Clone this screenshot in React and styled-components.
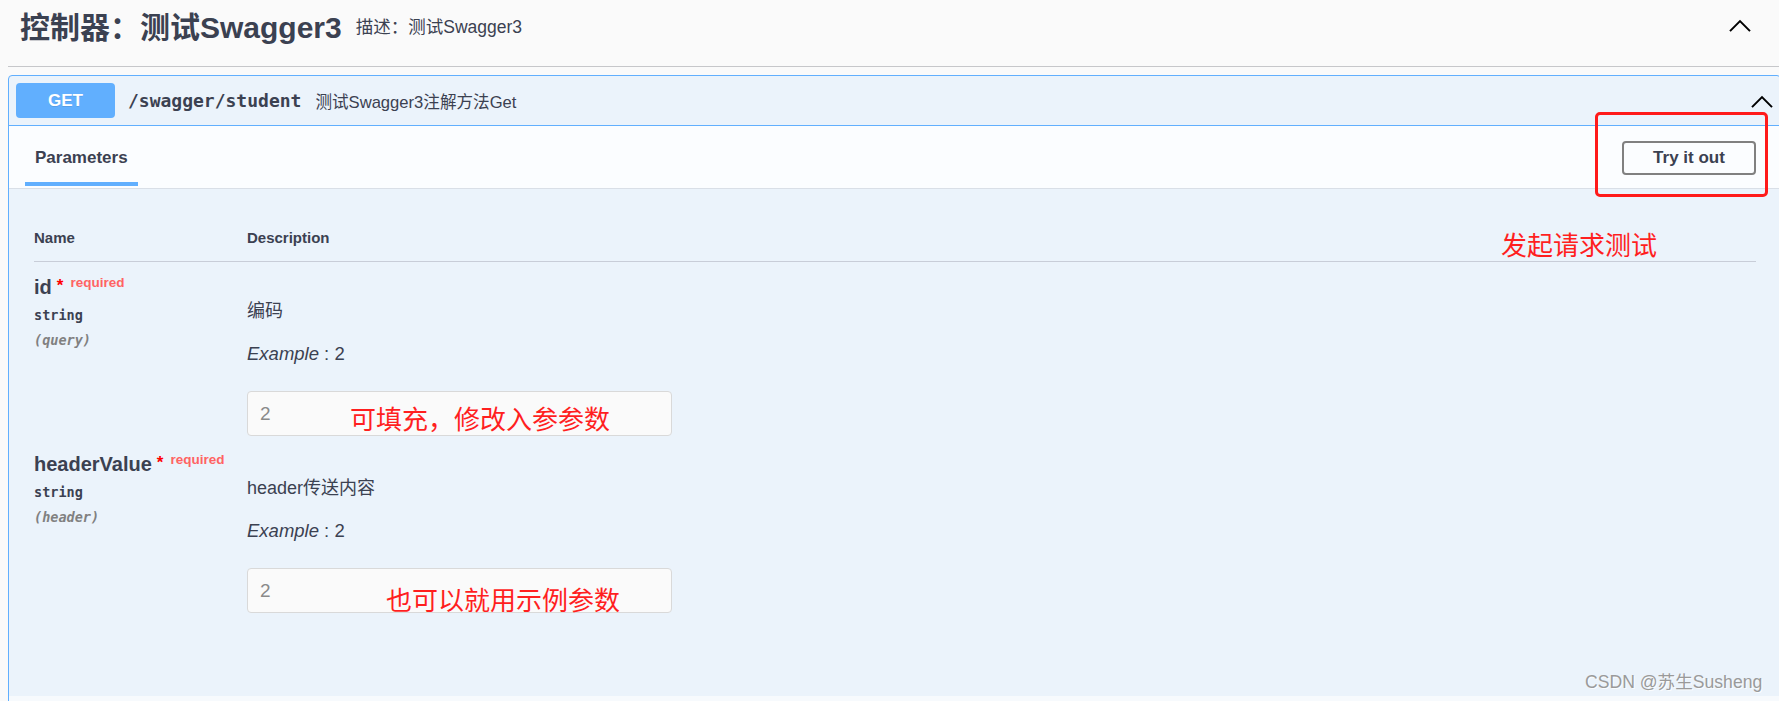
import React from 'react';
import styled, { createGlobalStyle } from 'styled-components';

const GlobalStyle = createGlobalStyle`
  html, body {
    margin: 0;
    padding: 0;
    overflow: hidden;
    background: #fafafa;
  }
  body {
    font-family: "Liberation Sans", Arial, "Noto Sans CJK SC", sans-serif;
    color: #3b4151;
  }
`;

const params = [
  { name: 'id', type: 'string', place: '(query)', desc: '编码', example: '2', note: '可填充，修改入参参数', noteLeft: 103 },
  { name: 'headerValue', type: 'string', place: '(header)', desc: 'header传送内容', example: '2', note: '也可以就用示例参数', noteLeft: 139, noteTop: 16 },
];

const Chevron = ({ size = 22 }) => (
  <svg width={size} height={size * 0.6} viewBox="0 0 22 13" fill="none">
    <polyline points="1,12 11,2 21,12" stroke="#000" strokeWidth="2" />
  </svg>
);

const App = () => {
  return (
    <Page>
      <GlobalStyle />
      <TagHeader>
        <TagTitle>控制器：测试Swagger3</TagTitle>
        <TagDesc>描述：测试Swagger3</TagDesc>
        <TagToggle><Chevron /></TagToggle>
      </TagHeader>

      <Opblock>
        <Summary>
          <Method>GET</Method>
          <Path>/swagger/student</Path>
          <SummaryDesc>测试Swagger3注解方法Get</SummaryDesc>
          <SummaryToggle><Chevron /></SummaryToggle>
        </Summary>

        <SectionHeader>
          <Tab>Parameters</Tab>
          <TryButton>Try it out</TryButton>
        </SectionHeader>

        <Body>
          <TableHead>
            <HeadCell>Name</HeadCell>
            <HeadCell>Description</HeadCell>
          </TableHead>
          {params.map((p, i) => (
            <Row key={p.name} first={i === 0}>
              <NameCol>
                <ParamName>
                  {p.name}
                  <Star>*</Star>
                  <Required>required</Required>
                </ParamName>
                <ParamType>{p.type}</ParamType>
                <ParamIn>{p.place}</ParamIn>
              </NameCol>
              <DescCol>
                <DescText>{p.desc}</DescText>
                <Example><i>Example</i> : {p.example}</Example>
                <InputWrap>
                  <Field placeholder="2" readOnly />
                  <Note style={{ left: p.noteLeft, top: p.noteTop || 12 }}>{p.note}</Note>
                </InputWrap>
              </DescCol>
            </Row>
          ))}
        </Body>
        <Footer />
      </Opblock>

      <RedBox />
      <SideNote>发起请求测试</SideNote>
      <Watermark>CSDN @苏生Susheng</Watermark>
    </Page>
  );
};

const Page = styled.div`
  position: relative;
  width: 1781px;
  height: 701px;
  padding-left: 8px;
  box-sizing: border-box;
  overflow: hidden;
`;

const TagHeader = styled.div`
  display: flex;
  align-items: center;
  height: 67px;
  box-sizing: border-box;
  padding: 0 30px 10px 12px;
  border-bottom: 1px solid #c6c7ca;
`;

const TagTitle = styled.h4`
  margin: 0;
  font-size: 30px;
  font-weight: 700;
  line-height: 36px;
  color: #3b4151;
`;

const TagDesc = styled.span`
  margin-left: 14px;
  font-size: 17.5px;
  line-height: 20px;
  margin-top: -3px;
`;

const TagToggle = styled.div`
  margin-left: auto;
  display: flex;
  margin-top: -4px;
`;

const Opblock = styled.div`
  margin-top: 8px;
  border: 1px solid #61affe;
  border-radius: 4px;
  background: #ebf3fb;
`;

const Summary = styled.div`
  display: flex;
  align-items: center;
  padding: 7px;
  border-bottom: 1px solid #61affe;
`;

const Method = styled.span`
  width: 99px;
  height: 35px;
  display: flex;
  align-items: center;
  justify-content: center;
  background: #61affe;
  border-radius: 4px;
  color: #fff;
  font-size: 17px;
  font-weight: 700;
  text-shadow: 0 1px 0 rgba(0, 0, 0, 0.1);
`;

const Path = styled.span`
  margin-left: 13px;
  font-family: "DejaVu Sans Mono", monospace;
  font-weight: 700;
  font-size: 18px;
  color: #3b4151;
`;

const SummaryDesc = styled.span`
  margin-left: 14px;
  font-size: 16.6px;
`;

const SummaryToggle = styled.div`
  margin-left: auto;
  display: flex;
  margin-top: 2px;
`;

const SectionHeader = styled.div`
  display: flex;
  height: 63px;
  box-sizing: border-box;
  padding: 0 24px 0 16px;
  background: #fbfdff;
  border-bottom: 1px solid #d9dfe7;
`;

const Tab = styled.div`
  position: relative;
  display: flex;
  align-items: center;
  padding: 1px 10px 0;
  font-size: 17px;
  font-weight: 700;
  &::after {
    content: '';
    position: absolute;
    left: 0;
    right: 0;
    bottom: 2px;
    height: 4px;
    background: #61affe;
  }
`;

const TryButton = styled.button`
  margin-left: auto;
  align-self: center;
  width: 134px;
  height: 34px;
  border: 2px solid #808080;
  border-radius: 4px;
  background: transparent;
  font-family: "Liberation Sans", Arial, sans-serif;
  font-size: 17px;
  font-weight: 700;
  color: #3b4151;
  margin-top: 1px;
`;

const Body = styled.div`
  padding: 0 24px 83px 25px;
`;

const TableHead = styled.div`
  display: grid;
  grid-template-columns: 213px 1fr;
  padding: 39px 0 13px;
  border-bottom: 1px solid #c8cdd8;
`;

const HeadCell = styled.div`
  font-size: 15px;
  font-weight: 700;
  line-height: 20px;
`;

const Row = styled.div`
  display: grid;
  grid-template-columns: 213px 1fr;
  padding-top: ${p => (p.first ? '13px' : '16px')};
`;

const NameCol = styled.div`
  display: flex;
  flex-direction: column;
`;

const ParamName = styled.div`
  font-size: 20px;
  font-weight: 700;
  line-height: 24px;
  white-space: nowrap;
`;

const Star = styled.span`
  position: relative;
  top: -3px;
  margin-left: 5px;
  font-size: 17px;
  font-weight: 700;
  color: #f00;
`;

const Required = styled.span`
  position: relative;
  top: -7px;
  margin-left: 7px;
  font-size: 13.5px;
  font-weight: 700;
  color: #ff6363;
`;

const ParamType = styled.div`
  margin-top: 3px;
  font-family: "DejaVu Sans Mono", monospace;
  font-weight: 700;
  font-size: 13.5px;
  line-height: 20px;
`;

const ParamIn = styled.div`
  margin-top: 5px;
  font-family: "DejaVu Sans Mono", monospace;
  font-style: italic;
  font-weight: 600;
  font-size: 13.5px;
  line-height: 20px;
  color: #808080;
`;

const DescCol = styled.div`
  display: flex;
  flex-direction: column;
`;

const DescText = styled.p`
  margin: 23px 0 0;
  font-size: 18px;
  line-height: 26px;
`;

const Example = styled.p`
  margin: 17px 0 0;
  font-size: 18.5px;
  line-height: 26px;
`;

const InputWrap = styled.div`
  position: relative;
  margin-top: 24px;
  width: 425px;
`;

const Field = styled.input`
  display: block;
  width: 100%;
  height: 45px;
  box-sizing: border-box;
  padding: 0 12px;
  border: 1px solid #d9d9d9;
  border-radius: 4px;
  background: #fafafa;
  font-family: "Liberation Sans", Arial, sans-serif;
  font-size: 19px;
  outline: none;
  &::placeholder {
    color: #8a8a8a;
  }
`;

const Note = styled.span`
  position: absolute;
  font-family: "Noto Sans CJK SC", sans-serif;
  font-size: 26px;
  line-height: 30px;
  color: #ff1f1f;
  white-space: nowrap;
`;

const Footer = styled.div`
  height: 40px;
  background: #f7fafd;
`;

const RedBox = styled.div`
  position: absolute;
  left: 1595px;
  top: 112px;
  width: 173px;
  height: 85px;
  box-sizing: border-box;
  border: 3px solid #ff1a1a;
  border-radius: 5px;
`;

const SideNote = styled.span`
  position: absolute;
  left: 1501px;
  top: 229px;
  font-family: "Noto Sans CJK SC", sans-serif;
  font-size: 26px;
  line-height: 30px;
  color: #ff1f1f;
`;

const Watermark = styled.span`
  position: absolute;
  left: 1585px;
  top: 671px;
  font-family: "Liberation Sans", "Noto Sans CJK SC", sans-serif;
  font-size: 17.6px;
  line-height: 22px;
  color: #9a9a9a;
  text-shadow: 1px 1px 0 rgba(255, 255, 255, 0.8);
`;

export default App;
